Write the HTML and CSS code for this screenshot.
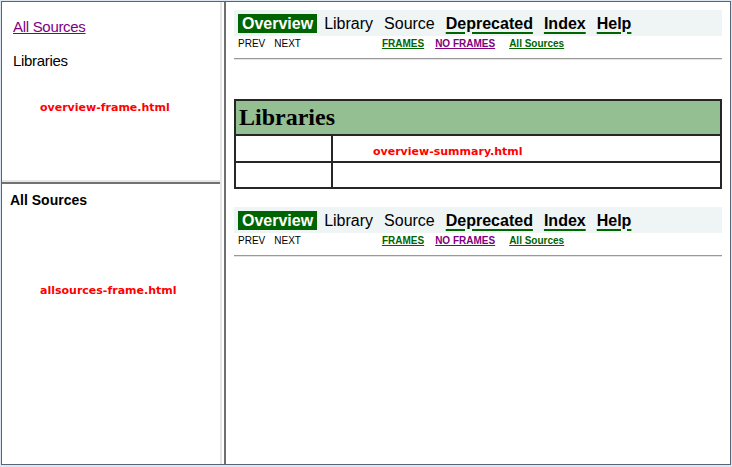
FILE: index.html
```html
<!DOCTYPE html>
<html>
<head>
<meta charset="utf-8">
<title>Overview</title>
<link rel="stylesheet" href="styles.css">
</head>
<body>
<div class="frameset">
  <div class="left">
    <div class="pane pane-top">
      <a class="src-link" href="#">All Sources</a>
      <div class="lib-item">Libraries</div>
      <span class="label label-overview">overview-frame.html</span>
    </div>
    <div class="hsplit"></div>
    <div class="pane pane-bottom">
      <div class="bottom-title">All Sources</div>
      <span class="label label-allsources">allsources-frame.html</span>
    </div>
  </div>
  <div class="vsplit"></div>
  <div class="right">
    <div class="nav">
      <span class="nav-item active">Overview</span>
      <span class="nav-item">Library</span>
      <span class="nav-item">Source</span>
      <a class="nav-item nav-link" href="#">Deprecated</a>
      <a class="nav-item nav-link" href="#">Index</a>
      <a class="nav-item nav-link" href="#">Help</a>
    </div>
    <div class="subnav">
      <span class="sub-plain">PREV</span>
      <span class="sub-plain sub-next">NEXT</span>
      <a class="sub-link sub-frames" href="#">FRAMES</a>
      <a class="sub-link sub-visited sub-noframes" href="#">NO FRAMES</a>
      <a class="sub-link sub-all" href="#">All Sources</a>
    </div>
    <div class="rule"></div>

    <table class="summary">
      <tr><th colspan="2" class="summary-head">Libraries</th></tr>
      <tr><td class="c1 r1"></td><td class="c2 r1"></td></tr>
      <tr><td class="c1 r2"></td><td class="c2 r2"></td></tr>
    </table>

    <div class="nav nav-bottom">
      <span class="nav-item active">Overview</span>
      <span class="nav-item">Library</span>
      <span class="nav-item">Source</span>
      <a class="nav-item nav-link" href="#">Deprecated</a>
      <a class="nav-item nav-link" href="#">Index</a>
      <a class="nav-item nav-link" href="#">Help</a>
    </div>
    <div class="subnav">
      <span class="sub-plain">PREV</span>
      <span class="sub-plain sub-next">NEXT</span>
      <a class="sub-link sub-frames" href="#">FRAMES</a>
      <a class="sub-link sub-visited sub-noframes" href="#">NO FRAMES</a>
      <a class="sub-link sub-all" href="#">All Sources</a>
    </div>
    <div class="rule"></div>

    <span class="label label-summary">overview-summary.html</span>
  </div>
</div>
</body>
</html>
```
FILE: styles.css
```css
html, body {
  margin: 0;
  padding: 0;
}
body {
  background: #dde7f1;
  font-family: "Liberation Sans", Arial, sans-serif;
  width: 732px;
  height: 467px;
  overflow: hidden;
}
.frameset {
  margin: 1px 0 0 1px;
  width: 730px;
  height: 464px;
  box-sizing: border-box;
  border: 1px solid #56657a;
  background: #fff;
  display: flex;
}
.left {
  width: 220px;
  box-sizing: border-box;
  border-right: 2px solid #e6e6e6;
  display: flex;
  flex-direction: column;
}
.vsplit {
  width: 2px;
  background: #fff;
}
.pane {
  position: relative;
}
.pane-top {
  border-bottom: 2px solid #e6e6e6;
  padding: 16px 0 0 11px;
  box-sizing: border-box;
  height: 180px;
}
.hsplit {
  height: 2px;
  background: #727272;
}
.pane-bottom {
  flex: 1;
  padding: 8px 0 0 8px;
}
.src-link {
  display: inline-block;
  font-size: 15px;
  letter-spacing: -0.3px;
  line-height: 16px;
  color: #800080;
  text-decoration: underline;
}
.lib-item {
  font-size: 15px;
  letter-spacing: -0.3px;
  line-height: 16px;
  margin-top: 17px;
  color: #000;
}
.bottom-title {
  font-size: 14px;
  font-weight: bold;
  line-height: 16px;
  color: #000;
}
.label {
  position: absolute;
  font-family: "DejaVu Sans", Verdana, sans-serif;
  font-weight: bold;
  font-size: 11px;
  line-height: 13px;
  color: #ff0000;
  white-space: nowrap;
}
.label-overview {
  left: 38px;
  top: 99px;
}
.label-allsources {
  left: 38px;
  top: 100px;
}
.label-summary {
  left: 147px;
  top: 143px;
}
.right {
  flex: 1;
  position: relative;
  border-left: 2px solid #6f6f6f;
  padding: 8px;
}
.nav {
  height: 26px;
  background: #eef5f4;
  display: flex;
  align-items: center;
  gap: 3px;
  padding-left: 4px;
  font-size: 16px;
}
.nav-bottom {
  margin-top: 18px;
}
.nav-item {
  padding: 0 4px;
  line-height: 19px;
  color: #000;
  text-decoration: none;
}
.nav-item.active {
  background: #006400;
  color: #fff;
  font-weight: bold;
}
.nav-link {
  font-weight: bold;
  text-decoration: underline;
  text-decoration-color: #006400;
  text-decoration-thickness: 2px;
  text-underline-offset: 3px;
}
.subnav {
  height: 14px;
  margin-top: 1px;
  display: flex;
  align-items: center;
  padding-left: 4px;
  font-size: 10px;
  line-height: 12px;
}
.sub-plain {
  color: #000;
}
.sub-next {
  margin-left: 9px;
}
.sub-link {
  font-weight: bold;
  color: #006400;
  text-decoration: underline;
}
.sub-visited {
  color: #800080;
}
.sub-frames {
  margin-left: 81px;
}
.sub-noframes {
  margin-left: 11px;
}
.sub-all {
  margin-left: 14px;
}
.rule {
  margin-top: 7px;
  height: 1px;
  background: #999;
  border-bottom: 1px solid #e4e4e4;
}
.summary {
  margin-top: 39px;
  width: 100%;
  border-spacing: 0;
  border-collapse: separate;
  border: 2px solid #262626;
}
.summary-head {
  background: #93bf93;
  height: 33px;
  padding: 0 0 0 3px;
  text-align: left;
  font-family: "Liberation Serif", "Times New Roman", serif;
  font-size: 24px;
  font-weight: bold;
  color: #000;
  border-bottom: 2px solid #262626;
}
.summary td {
  padding: 0;
}
.c1 {
  width: 95px;
  border-right: 2px solid #262626;
}
.r1 {
  height: 25px;
  border-bottom: 2px solid #262626;
}
.r2 {
  height: 24px;
}
```
